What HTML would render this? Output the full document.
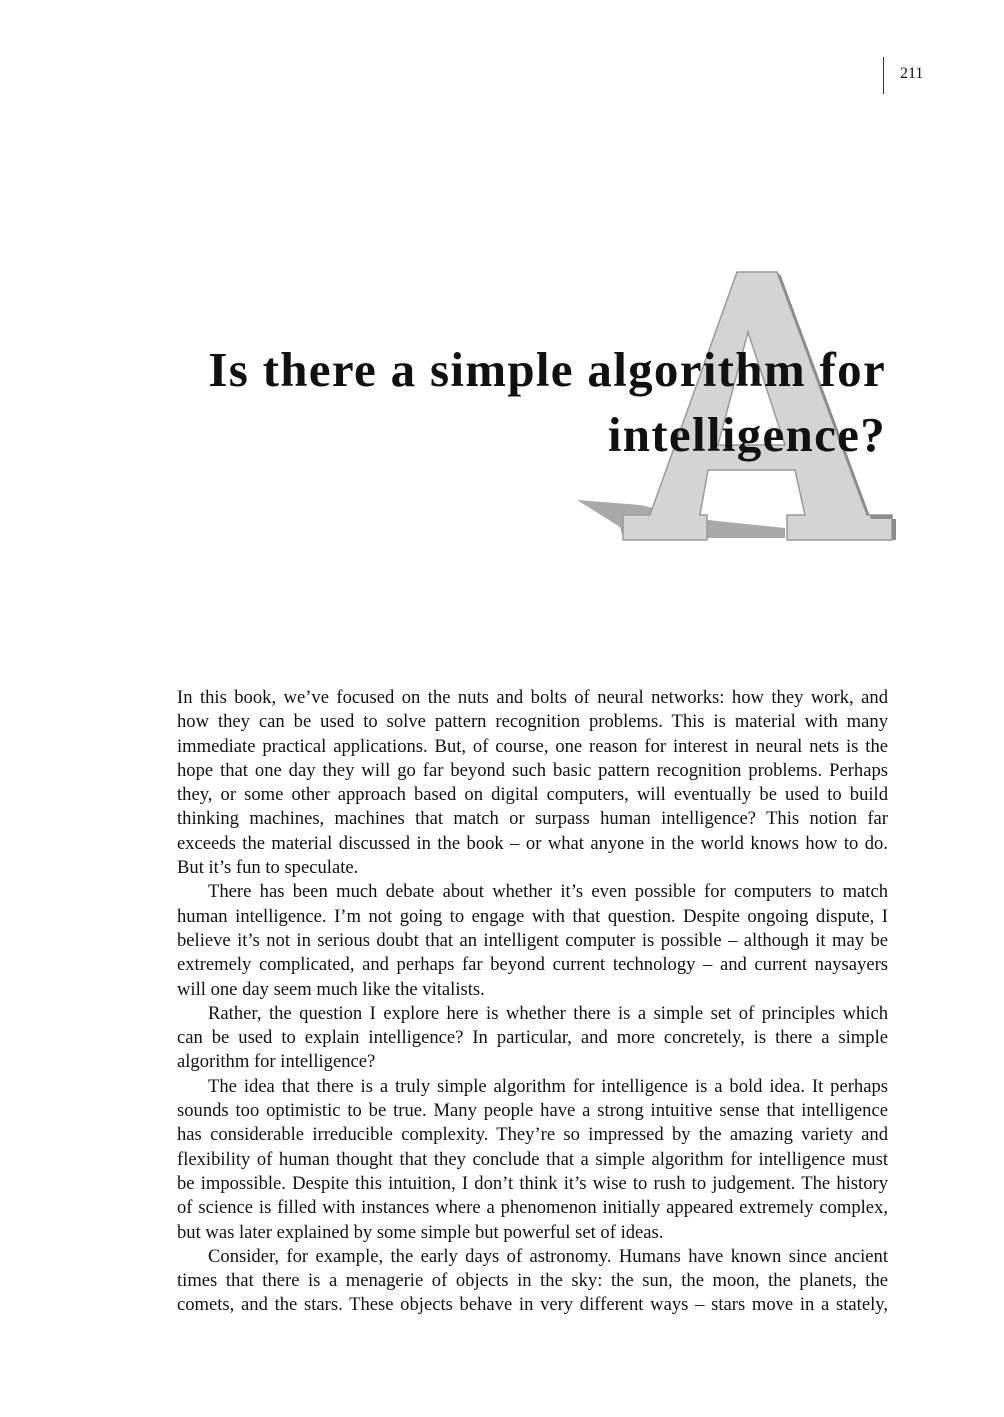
<!DOCTYPE html>
<html><head><meta charset="utf-8"><style>
html,body{margin:0;padding:0;background:#fff;}
body{width:1004px;height:1417px;position:relative;overflow:hidden;font-family:"Liberation Serif",serif;color:#111;}
.pn{position:absolute;left:900px;top:65px;font-size:16px;}
.rule{position:absolute;left:883px;top:57px;width:1px;height:37px;background:#333;}
svg{position:absolute;left:0;top:0;}
.title{position:absolute;right:118px;top:337px;text-align:right;font-weight:bold;font-size:49px;line-height:65px;color:#111;letter-spacing:1.3px;white-space:nowrap;}
.body{position:absolute;left:177px;top:686px;width:711px;font-size:18.6px;line-height:24.3px;}
.body div{text-align:justify;text-align-last:justify;white-space:nowrap;}
.body div.l{text-align-last:left;}
.body div.i{padding-left:31px;}
</style></head><body>
<div class="rule"></div><div class="pn">211</div>
<svg width="1004" height="1417">
<polygon points="577,500 640,505 708,520 785,528 785,538 623,538 620,527" fill="#a9a9a9"/>
<g stroke="#999" stroke-width="1.5">
<polygon points="737,272 777,272 867,515 892,515 892,540 787,540 787,515 805,515 795,470 708,470 700,515 707,515 707,540 623,540 623,515 650,515" fill="#d4d4d4"/>
<polygon points="748,332 718,445 785,445" fill="#fff"/>
</g>
<polygon points="777,272 867,515 892,515 892,540 896,540 896,519 871,519 781,276" fill="#8c8c8c"/>
</svg>
<div class="title">Is there a simple algorithm for<br>intelligence?</div>
<div class="body">
<div>In this book, we’ve focused on the nuts and bolts of neural networks: how they work, and</div>
<div>how they can be used to solve pattern recognition problems. This is material with many</div>
<div>immediate practical applications. But, of course, one reason for interest in neural nets is the</div>
<div>hope that one day they will go far beyond such basic pattern recognition problems. Perhaps</div>
<div>they, or some other approach based on digital computers, will eventually be used to build</div>
<div>thinking machines, machines that match or surpass human intelligence? This notion far</div>
<div>exceeds the material discussed in the book – or what anyone in the world knows how to do.</div>
<div class="l">But it’s fun to speculate.</div>
<div class="i">There has been much debate about whether it’s even possible for computers to match</div>
<div>human intelligence. I’m not going to engage with that question. Despite ongoing dispute, I</div>
<div>believe it’s not in serious doubt that an intelligent computer is possible – although it may be</div>
<div>extremely complicated, and perhaps far beyond current technology – and current naysayers</div>
<div class="l">will one day seem much like the vitalists.</div>
<div class="i">Rather, the question I explore here is whether there is a simple set of principles which</div>
<div>can be used to explain intelligence? In particular, and more concretely, is there a simple</div>
<div class="l">algorithm for intelligence?</div>
<div class="i">The idea that there is a truly simple algorithm for intelligence is a bold idea. It perhaps</div>
<div>sounds too optimistic to be true. Many people have a strong intuitive sense that intelligence</div>
<div>has considerable irreducible complexity. They’re so impressed by the amazing variety and</div>
<div>flexibility of human thought that they conclude that a simple algorithm for intelligence must</div>
<div>be impossible. Despite this intuition, I don’t think it’s wise to rush to judgement. The history</div>
<div>of science is filled with instances where a phenomenon initially appeared extremely complex,</div>
<div class="l">but was later explained by some simple but powerful set of ideas.</div>
<div class="i">Consider, for example, the early days of astronomy. Humans have known since ancient</div>
<div>times that there is a menagerie of objects in the sky: the sun, the moon, the planets, the</div>
<div>comets, and the stars. These objects behave in very different ways – stars move in a stately,</div>
</div>
</body></html>
